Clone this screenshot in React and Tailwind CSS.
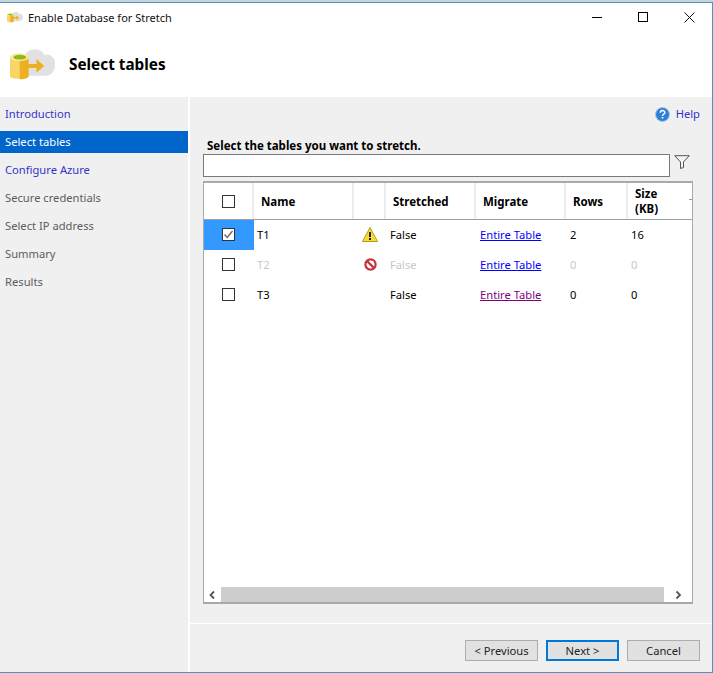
import React from 'react';

const steps = [
  { label: 'Introduction', tone: 'text-[#3333cc]' },
  { label: 'Select tables', tone: 'text-white bg-[#0066cc]' },
  { label: 'Configure Azure', tone: 'text-[#3333cc]' },
  { label: 'Secure credentials', tone: 'text-[#5c5c5c]' },
  { label: 'Select IP address', tone: 'text-[#5c5c5c]' },
  { label: 'Summary', tone: 'text-[#5c5c5c]' },
  { label: 'Results', tone: 'text-[#5c5c5c]' },
];

const rows = [
  { name: 'T1', icon: 'warn', stretched: 'False', link: 'text-[#0000ff]', rows: '2', size: '16', checked: true },
  { name: 'T2', icon: 'block', stretched: 'False', link: 'text-[#0000ff]', rows: '0', size: '0', disabled: true },
  { name: 'T3', stretched: 'False', link: 'text-[#800080]', rows: '0', size: '0' },
];

const gridCols = 'grid grid-cols-[50px_100px_32px_90px_90px_62px_1fr]';

// cloud + yellow database + arrow, same drawing for the title bar and the banner
const WizardIcon = ({ className }) => (
  <svg viewBox="0 0 46 32" className={className}>
    <path d="M15 28V9c0-5 6-9 12-8 4 .5 7 3 8 6 3-1 10 0 11 7 1 7-3 14-9 14z" fill="#e1e1e1" />
    <path d="M0 9h19v20c-3 3-16 3-19 0z" fill="#f9d466" />
    <path d="M10 11h9v18c-2 2-6 2.500-9 2.700z" fill="#edb021" />
    <ellipse cx="9.500" cy="9" rx="9.500" ry="4" fill="#fbe9a6" />
    <ellipse cx="10" cy="9" rx="6.500" ry="2.500" fill="#8dbb10" />
    <path d="M18 16h9v-5l8 7-8 7v-5h-9z" fill="#edb021" />
  </svg>
);

const WarnIcon = () => (
  <svg viewBox="0 0 16 15" className="w-4 h-[15px]">
    <path d="M8 .5 15.500 14.500H.5z" fill="#f7dc2e" stroke="#b09a20" strokeLinejoin="round" />
    <rect x="7" y="5" width="2" height="5" fill="#222" />
    <rect x="7" y="11" width="2" height="2" fill="#222" />
  </svg>
);

const BlockIcon = () => (
  <svg viewBox="0 0 14 14" className="w-[13px] h-[13px]">
    <circle cx="7" cy="7" r="5.500" fill="#fff" stroke="#c8323c" strokeWidth="2.400" />
    <path d="M3.500 3.500l7 7" stroke="#c8323c" strokeWidth="2.600" />
  </svg>
);

const HelpIcon = () => (
  <svg viewBox="0 0 15 15" className="w-[15px] h-[15px]">
    <circle cx="7.500" cy="7.500" r="7" fill="#2f7fd6" stroke="#a9c8ea" />
    <path d="M5.300 5.800c0-3 4.500-3 4.500-.3 0 1.800-2.300 1.700-2.300 3.500" fill="none" stroke="#fff" strokeWidth="1.500" />
    <rect x="6.700" y="10" width="1.600" height="1.600" fill="#fff" />
  </svg>
);

const FilterIcon = () => (
  <svg viewBox="0 0 16 14" className="w-4 h-[14px]">
    <path d="M.7.7h14.600L9.500 7v5.500l-3 1V7z" fill="#f4f4f4" stroke="#555" />
  </svg>
);

const Check = ({ checked }) => (
  <div className="w-[13px] h-[13px] border border-[#333] bg-white flex items-center justify-center">
    {checked && (
      <svg viewBox="0 0 11 11" className="w-[11px] h-[11px]">
        <path d="M1.500 5.500 4.200 8.500 9.500 2" fill="none" stroke="#666" strokeWidth="1.300" />
      </svg>
    )}
  </div>
);

const HeadCell = ({ children, className = '' }) => (
  <div className={`flex items-center border-r-2 border-[#ececec] font-bold text-black text-[11.5px] ${className}`}>{children}</div>
);

const Button = ({ children, primary }) => (
  <button className={`w-[73px] h-[21px] bg-[#e1e1e1] text-[#222] text-[11.2px] leading-none ${primary ? 'border-2 border-[#0078d7]' : 'border border-[#adadad]'}`}>
    {children}
  </button>
);

const App = () => (
  <div className="w-[713px] h-[673px] overflow-hidden flex flex-col bg-white text-[11.2px] text-black font-['Noto_Sans','Open_Sans',sans-serif]">
    <div className="h-[2px] bg-[#c9d3da]" />
    <div className="flex-1 min-h-0 flex flex-col border-t border-r border-b border-[#4a94c8]">
      {/* Title bar */}
      <div className="h-[28px] flex items-center pl-[7px]">
        <WizardIcon className="w-4 h-3" />
        <span className="ml-[5px] pt-[2px] text-[11px] text-[#111]">Enable Database for Stretch</span>
        <div className="ml-auto flex items-center pr-[17px] gap-[36px]">
          <div className="w-[10px] h-px bg-black" />
          <div className="w-[10px] h-[10px] border border-black" />
          <svg viewBox="0 0 11 11" className="w-[11px] h-[11px]">
            <path d="M.5.500l10 10M10.500.5l-10 10" stroke="#111" />
          </svg>
        </div>
      </div>

      {/* Banner */}
      <div className="h-[66px] flex items-center pl-[10px]">
        <WizardIcon className="w-[45px] h-[32px]" />
        <h1 className="ml-[14px] pt-px text-[15.300px] font-bold">Select tables</h1>
      </div>

      <div className="flex-1 min-h-0 flex gap-[2px]">
        {/* Steps */}
        <nav className="w-[188px] bg-[#f0f0f0] pt-[6px] flex flex-col gap-[6px]">
          {steps.map((s) => (
            <div key={s.label} className={`h-[22px] pl-[5px] flex items-center ${s.tone}`}>{s.label}</div>
          ))}
        </nav>

        {/* Page */}
        <main className="flex-1 bg-[#f0f0f0] flex flex-col">
          <div className="h-[34px] flex items-center justify-end gap-[6px] pr-[12px] text-[#3333cc]">
            <HelpIcon />
            <span>Help</span>
          </div>
          <div className="pl-[13px] pr-[19px] flex-1 min-h-0 flex flex-col">
            <div className="h-[23px] flex items-end pl-[4px] font-bold text-[11.5px] leading-[17px]">Select the tables you want to stretch.</div>
            <div className="h-[23px] flex items-start gap-[4px]">
              <div className="w-[467px] h-[23px] bg-white border border-[#7a7a7a]" />
              <div className="pt-px"><FilterIcon /></div>
            </div>
            <div className="mt-[4px] h-[423px] flex flex-col bg-white border-x border-t-2 border-b-2 border-[#a9a9a9]">
              <div className={`${gridCols} h-[37px] border-b border-[#a0a0a0]`}>
                <HeadCell className="justify-center"><Check /></HeadCell>
                <HeadCell className="pl-[7px] pt-px">Name</HeadCell>
                <HeadCell />
                <HeadCell className="pl-[7px] pt-px">Stretched</HeadCell>
                <HeadCell className="pl-[7px] pt-px">Migrate</HeadCell>
                <HeadCell className="pl-[7px] pt-px">Rows</HeadCell>
                <div className="relative flex items-center pl-[7px] font-bold text-[11.5px] leading-[15px]">
                  <div>Size<br />(KB)</div>
                  <span className="absolute right-0 top-[16px] w-[3px] h-px bg-[#999]" />
                </div>
              </div>
              <div className="flex-1 min-h-0">
                {rows.map((r) => (
                  <div key={r.name} className={`${gridCols} h-[30px] items-stretch ${r.disabled ? 'text-[#c8c8c8]' : 'text-black'}`}>
                    <div className={`flex items-center justify-center pr-[2px] pb-px ${r.checked ? 'bg-[#3399ff]' : ''}`}>
                      <Check checked={r.checked} />
                    </div>
                    <div className="flex items-center pl-[3px] pt-px">{r.name}</div>
                    <div className="flex items-center justify-center pb-px">
                      {r.icon === 'warn' && <WarnIcon />}
                      {r.icon === 'block' && <BlockIcon />}
                    </div>
                    <div className="flex items-center pl-[4px] pt-px">{r.stretched}</div>
                    <div className="flex items-center pl-[4px] pt-px">
                      <span className={`underline ${r.link}`}>Entire Table</span>
                    </div>
                    <div className="flex items-center pl-[4px] pt-px">{r.rows}</div>
                    <div className="flex items-center pl-[3px] pt-px">{r.size}</div>
                  </div>
                ))}
              </div>
              <div className="h-[15px] flex items-center">
                <svg viewBox="0 0 8 10" className="w-[17px] h-[10px] shrink-0">
                  <path d="M5.500 1.500 2 5l3.500 3.500" fill="none" stroke="#555" strokeWidth="1.800" />
                </svg>
                <div className="flex-1 h-[15px] bg-[#cdcdcd]" />
                <svg viewBox="0 0 8 10" className="w-[28px] h-[10px] shrink-0">
                  <path d="M2.500 1.500 6 5 2.500 8.500" fill="none" stroke="#555" strokeWidth="1.800" />
                </svg>
              </div>
            </div>
          </div>
          <div className="h-[49px] border-t border-white flex items-start justify-end gap-[8px] pt-[16px] pr-[12px]">
            <Button>&lt; Previous</Button>
            <Button primary>Next &gt;</Button>
            <Button>Cancel</Button>
          </div>
        </main>
      </div>
    </div>
  </div>
);

export default App;
